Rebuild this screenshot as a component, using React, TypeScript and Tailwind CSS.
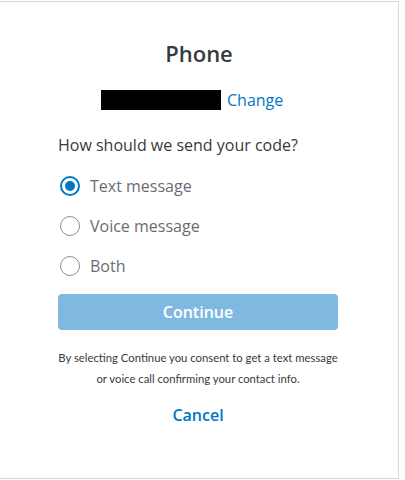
import { useState } from 'react';

const options = ['Text message', 'Voice message', 'Both'];

export default function App() {
    const [choice, setChoice] = useState('Text message');

    return (
        <div className="w-[405px] h-[480px] bg-white" style={{ fontFamily: '"Open Sans", sans-serif' }}>
            <div className="w-[399px] h-[478px] mt-px border-t border-r border-b border-[#d4d7dc] flex flex-col items-center">
                <h1 className="mt-[37px] text-[22px] leading-[28px] font-semibold text-[#393a3d]">Phone</h1>

                <div className="mt-[23px] self-start ml-[101px] flex items-center gap-[6px] h-5">
                    <div className="w-[120px] h-5 bg-black" />
                    <button className="text-[16px] leading-5 text-[#0077c5]">Change</button>
                </div>

                <div className="w-[280px] self-start ml-[58px] mt-[23px]">
                    <p className="text-[16px] leading-6 font-medium text-[#393a3d]">How should we send your code?</p>

                    <div className="mt-[19px] flex flex-col gap-5">
                        {options.map((o) => (
                            <label key={o} className="flex items-center gap-[10px] h-5 ml-[2px] cursor-pointer" onClick={() => setChoice(o)}>
                                {choice === o ? (
                                    <span className="w-5 h-5 rounded-full border-2 border-[#0077c5] flex items-center justify-center">
                                        <span className="w-[10px] h-[10px] rounded-full bg-[#0077c5]" />
                                    </span>
                                ) : (
                                    <span className="w-5 h-5 rounded-full border border-[#8d9096]" />
                                )}
                                <span className="text-[16px] leading-5 text-[#6b6c72]">{o}</span>
                            </label>
                        ))}
                    </div>

                    <button className="mt-[18px] w-full h-9 rounded bg-[#7fb9e1] text-white text-[16px] font-semibold">Continue</button>

                    <p className="mt-[17px] text-center whitespace-nowrap text-[11.3px] leading-[21px] text-[#393a3d]" style={{ fontFamily: 'Lato, sans-serif' }}>
                        By selecting Continue you consent to get a text message<br />
                        or voice call confirming your contact info.
                    </p>

                    <div className="mt-[14px] text-center">
                        <button className="text-[16px] leading-6 font-semibold text-[#0077c5]">Cancel</button>
                    </div>
                </div>
            </div>
        </div>
    );
}
